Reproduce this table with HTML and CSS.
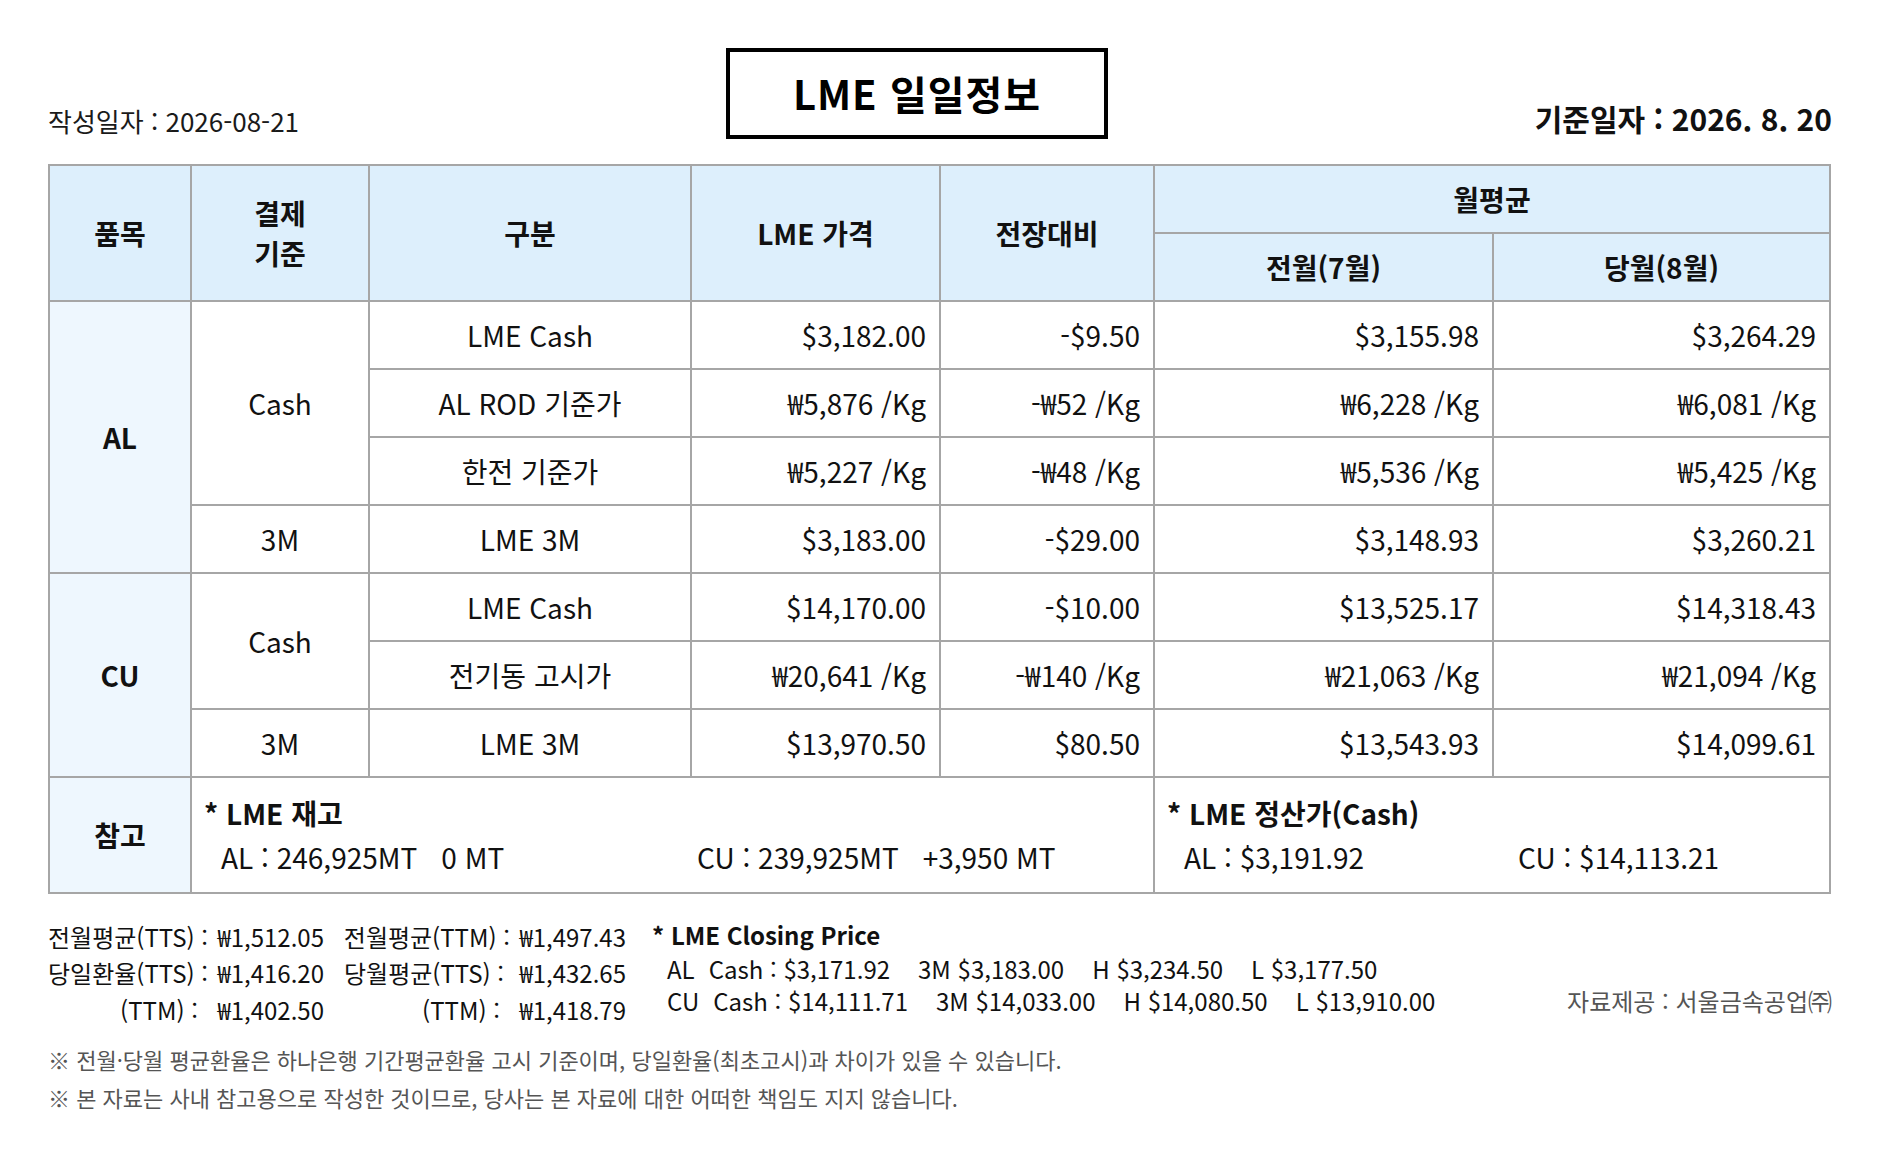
FILE: index.html
```html
<!DOCTYPE html>
<html lang="ko">
<head>
<meta charset="utf-8">
<title>LME 일일정보</title>
<link rel="stylesheet" href="styles.css">
</head>
<body>
<div class="page">
  <header class="top">
    <div class="made">작성일자 : 2026-08-21</div>
    <div class="title">LME 일일정보</div>
    <div class="base">기준일자 : 2026. 8. 20</div>
  </header>

  <table class="lme">
    <colgroup>
      <col class="c1"><col class="c2"><col class="c3"><col class="c4"><col class="c5"><col class="c6"><col class="c7">
    </colgroup>
    <thead>
      <tr>
        <th rowspan="2">품목</th>
        <th rowspan="2">결제<br>기준</th>
        <th rowspan="2">구분</th>
        <th rowspan="2">LME 가격</th>
        <th rowspan="2">전장대비</th>
        <th colspan="2">월평균</th>
      </tr>
      <tr>
        <th>전월(7월)</th>
        <th>당월(8월)</th>
      </tr>
    </thead>
    <tbody>
      <tr>
        <td rowspan="4" class="item">AL</td>
        <td rowspan="3">Cash</td>
        <td>LME Cash</td>
        <td class="num">$3,182.00</td>
        <td class="num">-$9.50</td>
        <td class="num">$3,155.98</td>
        <td class="num">$3,264.29</td>
      </tr>
      <tr>
        <td>AL ROD 기준가</td>
        <td class="num">₩5,876 /Kg</td>
        <td class="num">-₩52 /Kg</td>
        <td class="num">₩6,228 /Kg</td>
        <td class="num">₩6,081 /Kg</td>
      </tr>
      <tr>
        <td>한전 기준가</td>
        <td class="num">₩5,227 /Kg</td>
        <td class="num">-₩48 /Kg</td>
        <td class="num">₩5,536 /Kg</td>
        <td class="num">₩5,425 /Kg</td>
      </tr>
      <tr>
        <td>3M</td>
        <td>LME 3M</td>
        <td class="num">$3,183.00</td>
        <td class="num">-$29.00</td>
        <td class="num">$3,148.93</td>
        <td class="num">$3,260.21</td>
      </tr>
      <tr>
        <td rowspan="3" class="item">CU</td>
        <td rowspan="2">Cash</td>
        <td>LME Cash</td>
        <td class="num">$14,170.00</td>
        <td class="num">-$10.00</td>
        <td class="num">$13,525.17</td>
        <td class="num">$14,318.43</td>
      </tr>
      <tr>
        <td>전기동 고시가</td>
        <td class="num">₩20,641 /Kg</td>
        <td class="num">-₩140 /Kg</td>
        <td class="num">₩21,063 /Kg</td>
        <td class="num">₩21,094 /Kg</td>
      </tr>
      <tr>
        <td>3M</td>
        <td>LME 3M</td>
        <td class="num">$13,970.50</td>
        <td class="num">$80.50</td>
        <td class="num">$13,543.93</td>
        <td class="num">$14,099.61</td>
      </tr>
      <tr class="ref">
        <td class="item">참고</td>
        <td colspan="4" class="refcell">
          <div class="ref-title">* LME 재고</div>
          <div class="ref-line">
            <span class="ref-a stock">AL : 246,925MT<span class="gap">0 MT</span></span>
            <span class="ref-b">CU : 239,925MT<span class="gap">+3,950 MT</span></span>
          </div>
        </td>
        <td colspan="2" class="refcell">
          <div class="ref-title">* LME 정산가(Cash)</div>
          <div class="ref-line">
            <span class="ref-a settle">AL : $3,191.92</span>
            <span class="ref-b">CU : $14,113.21</span>
          </div>
        </td>
      </tr>
    </tbody>
  </table>

  <section class="fx">
    <div class="rates">
      <span class="lab">전월평균(TTS) :</span><span class="val">₩1,512.05</span>
      <span class="lab2 tight">전월평균(TTM) :</span><span class="val2">₩1,497.43</span>
      <span class="lab">당일환율(TTS) :</span><span class="val">₩1,416.20</span>
      <span class="lab2">당월평균(TTS) :</span><span class="val2">₩1,432.65</span>
      <span class="lab wide">(TTM) :</span><span class="val">₩1,402.50</span>
      <span class="lab2 wide">(TTM) :</span><span class="val2">₩1,418.79</span>
    </div>
    <div class="closing">
      <div class="closing-title">* LME Closing Price</div>
      <div class="closing-line"><span class="metal">AL</span>Cash : $3,171.92<span class="sp">3M $3,183.00</span><span class="sp">H $3,234.50</span><span class="sp">L $3,177.50</span></div>
      <div class="closing-line"><span class="metal">CU</span>Cash : $14,111.71<span class="sp">3M $14,033.00</span><span class="sp">H $14,080.50</span><span class="sp">L $13,910.00</span></div>
    </div>
    <div class="source">자료제공 : 서울금속공업㈜</div>
  </section>

  <section class="notes">
    <p>※ 전월·당월 평균환율은 하나은행 기간평균환율 고시 기준이며, 당일환율(최초고시)과 차이가 있을 수 있습니다.</p>
    <p>※ 본 자료는 사내 참고용으로 작성한 것이므로, 당사는 본 자료에 대한 어떠한 책임도 지지 않습니다.</p>
  </section>
</div>
</body>
</html>
```

FILE: styles.css
```css
* { box-sizing: border-box; }
html, body { margin: 0; padding: 0; background: #ffffff; }
body {
  font-family: "Noto Sans CJK KR", "Noto Sans", sans-serif;
  color: #111111;
}
.page {
  width: 1880px;
  padding: 48px 48px 0 48px;
}

/* header */
.top {
  display: flex;
  align-items: flex-end;
  height: 91px;
}
.made {
  flex: 0 0 678px;
  font-size: 26px;
  line-height: 30px;
  margin-bottom: 3px;
  color: #1a1a1a;
}
.title {
  flex: 0 0 382px;
  height: 91px;
  border: 4px solid #000000;
  display: flex;
  align-items: center;
  justify-content: center;
  font-size: 40px;
  font-weight: 700;
  letter-spacing: 1px;
  color: #000000;
  padding-bottom: 2px;
}
.base {
  flex: 1 1 auto;
  text-align: right;
  font-size: 30px;
  font-weight: 700;
  line-height: 34px;
  margin-bottom: 4px;
}

/* table */
.lme {
  margin-top: 25px;
  width: 1781px;
  border-collapse: collapse;
  table-layout: fixed;
  font-size: 28px;
}
.c1 { width: 142px; }
.c2 { width: 178px; }
.c3 { width: 322px; }
.c4 { width: 249px; }
.c5 { width: 214px; }
.c6 { width: 339px; }
.c7 { width: 337px; }
.lme th, .lme td {
  border: 2px solid #a6a6a6;
  padding: 0 13px;
  text-align: center;
  vertical-align: middle;
}
.lme th {
  background: #ddeffc;
  font-weight: 700;
  line-height: 40px;
}
.lme thead tr { height: 68px; }
.lme tbody tr { height: 68px; }
.lme td { line-height: 34px; }
.lme td.item {
  background: #eef7fe;
  font-weight: 700;
}
.lme td.num { text-align: right; }

.lme tr.ref { height: 116px; }
.lme td.refcell {
  text-align: left;
  vertical-align: top;
  padding: 13px 12px 12px 12px;
}
.ref-title {
  font-weight: 700;
  line-height: 44px;
}
.ref-line {
  display: flex;
  line-height: 44px;
  padding-left: 17px;
}
.ref-a.stock { flex: 0 0 476px; }
.ref-a.settle { flex: 0 0 334px; }
.gap { margin-left: 24px; }

/* fx block */
.fx {
  display: flex;
  align-items: flex-start;
  margin-top: 23px;
  font-size: 24px;
}
.rates {
  display: grid;
  grid-template-columns: 160px 116px 186px 116px;
  grid-template-rows: 35px 36px 38px;
  align-items: center;
  padding-top: 2px;
  white-space: nowrap;
}
.lab, .lab2 { text-align: right; white-space: pre; }
.lab { padding-right: 4px; }
.lab2 { padding-right: 6px; }
.lab2.tight { padding-right: 0; }
.lab.wide { padding-right: 10px; }
.lab2.wide { padding-right: 10px; }
.val, .val2 { text-align: right; }
.closing {
  margin-left: 26px;
  white-space: nowrap;
}
.closing-title {
  font-weight: 700;
  font-size: 24px;
  line-height: 36px;
}
.closing-line {
  padding-left: 15px;
  line-height: 32px;
}
.metal { margin-right: 14px; }
.sp { margin-left: 28px; }
.source {
  flex: 1 1 auto;
  text-align: right;
  color: #555555;
  margin-top: 68px;
  line-height: 32px;
  white-space: nowrap;
}

/* notes */
.notes {
  margin-top: 12px;
  font-size: 22px;
  color: #555555;
}
.notes p {
  margin: 0;
  line-height: 38px;
}
```
